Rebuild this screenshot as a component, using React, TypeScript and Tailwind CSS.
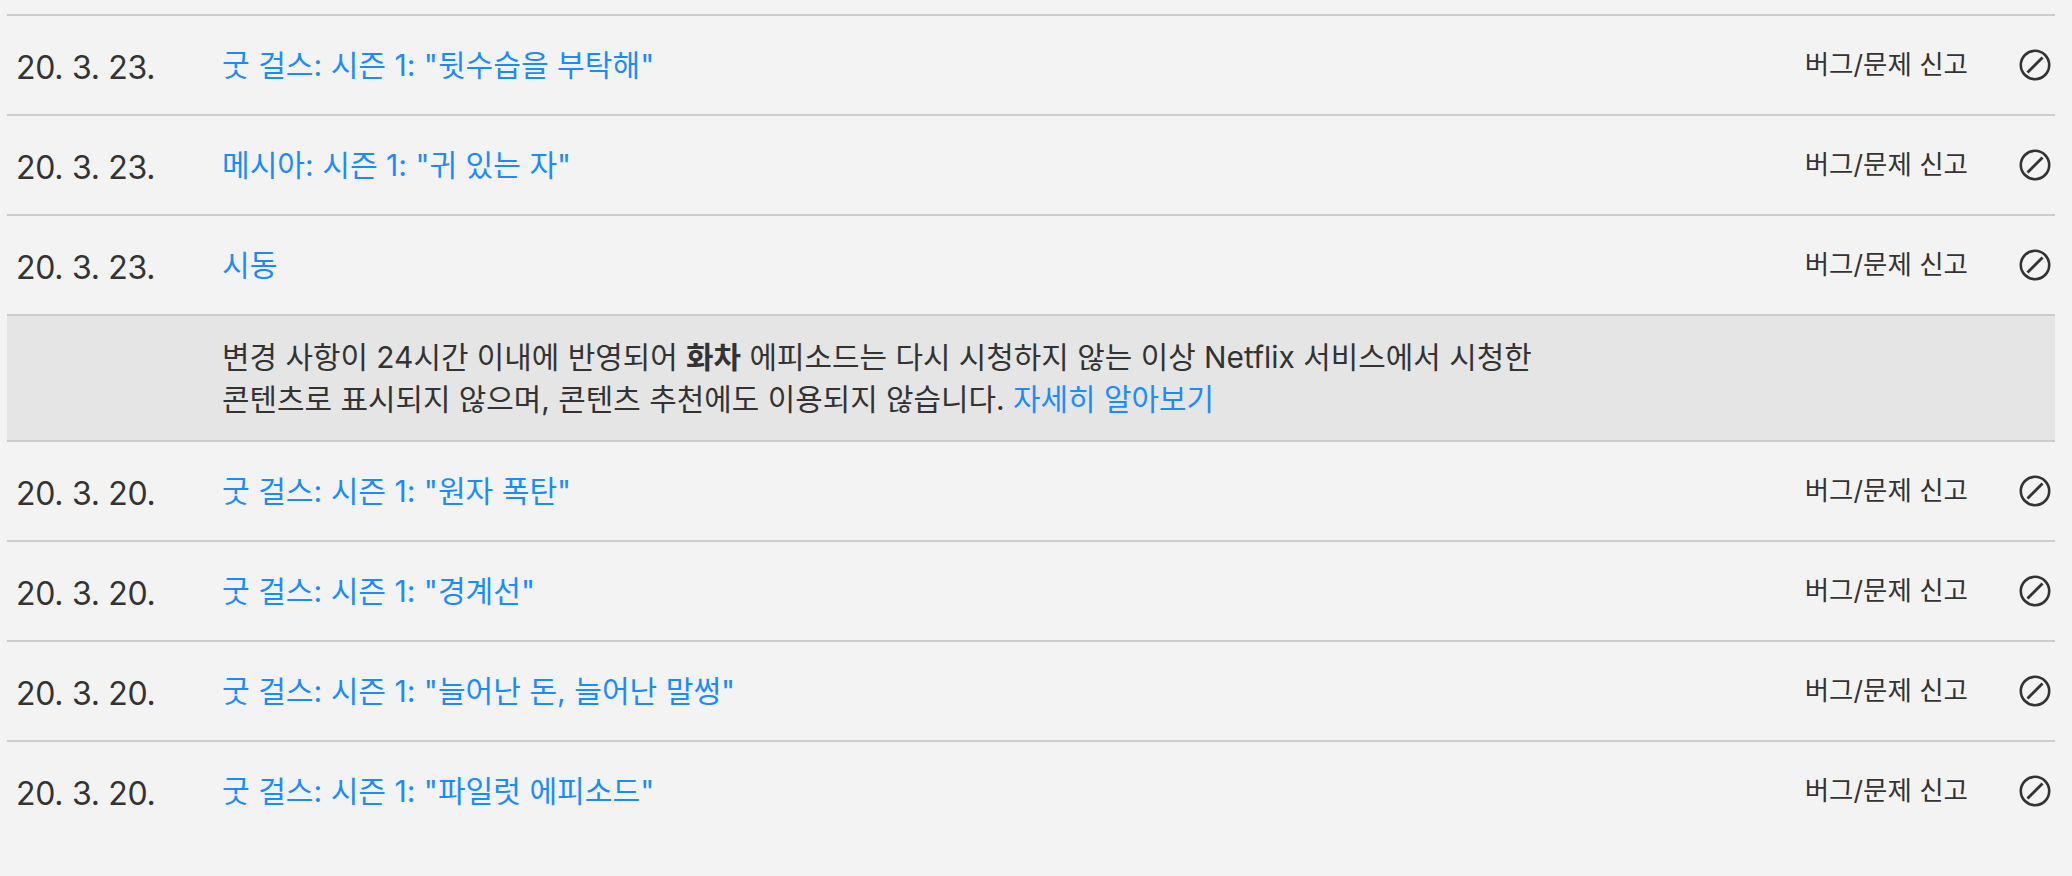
function Row({ date, title }: { date: string; title: string }) {
  return (
    <div className="flex h-[100px] items-center border-t-2 border-[#cccccc] pl-[9px] pr-[4px]">
      <div className="w-[206px] pt-[6px] text-[32px] leading-[36px] tracking-[-0.3px] text-[#333333]">{date}</div>
      <a className="flex-1 pb-[1px] pr-[8px] text-[30.1px] leading-[36px] text-[#1a8cff]">{title}</a>
      <div className="pb-[3px] text-[26.5px] leading-[30px] text-[#333333]">버그/문제 신고</div>
      <svg className="ml-[51px] h-[32px] w-[32px]" viewBox="0 0 32 32" fill="none" stroke="#333333" strokeWidth="2.6">
        <circle cx="16" cy="16" r="14.2" />
        <path d="M8.5 23.5 L23.5 8.5" strokeWidth="2.8" />
      </svg>
    </div>
  );
}

export default function App() {
  return (
    <div className="h-[876px] w-full overflow-hidden bg-[#f3f3f3] pt-[14px] pl-[7px] pr-[17px] [font-family:Inter,'Noto_Sans_CJK_KR',sans-serif]">
      <Row date="20. 3. 23." title={'굿 걸스: 시즌 1: "뒷수습을 부탁해"'} />
      <Row date="20. 3. 23." title={'메시아: 시즌 1: "귀 있는 자"'} />
      <Row date="20. 3. 23." title="시동" />
      <div className="h-[126px] border-t-2 border-[#cccccc] bg-[#e5e5e5] pl-[215px] pt-[20px] text-[29.9px] leading-[42px] text-[#333333]">
        변경 사항이 24시간 이내에 반영되어 <b>화차</b> 에피소드는 다시 시청하지 않는 이상 Netflix 서비스에서 시청한
        <br />
        콘텐츠로 표시되지 않으며, 콘텐츠 추천에도 이용되지 않습니다. <a className="text-[#1a8cff]">자세히 알아보기</a>
      </div>
      <Row date="20. 3. 20." title={'굿 걸스: 시즌 1: "원자 폭탄"'} />
      <Row date="20. 3. 20." title={'굿 걸스: 시즌 1: "경계선"'} />
      <Row date="20. 3. 20." title={'굿 걸스: 시즌 1: "늘어난 돈, 늘어난 말썽"'} />
      <Row date="20. 3. 20." title={'굿 걸스: 시즌 1: "파일럿 에피소드"'} />
    </div>
  );
}
